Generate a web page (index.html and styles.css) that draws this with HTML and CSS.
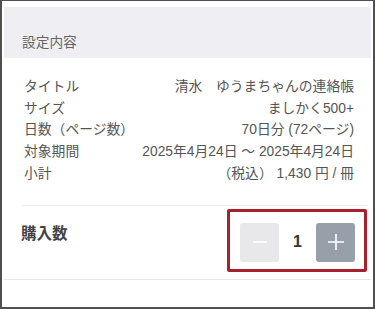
FILE: index.html
```html
<!DOCTYPE html>
<html lang="ja">
<head>
  <meta charset="UTF-8">
  <meta name="viewport" content="width=device-width, initial-scale=1.0">
  <title>設定内容</title>
  <link rel="stylesheet" href="styles.css">
</head>
<body>
  <div class="frame">
    <div class="section-head">設定内容</div>
    <dl class="spec">
      <div class="spec-row"><dt>タイトル</dt><dd>清水　ゆうまちゃんの連絡帳</dd></div>
      <div class="spec-row"><dt>サイズ</dt><dd>ましかく500+</dd></div>
      <div class="spec-row"><dt>日数（ページ数）</dt><dd>70日分 (72ページ)</dd></div>
      <div class="spec-row"><dt>対象期間</dt><dd>2025年4月24日 ～ 2025年4月24日</dd></div>
      <div class="spec-row"><dt>小計</dt><dd>（税込） 1,430 円 / 冊</dd></div>
    </dl>
    <div class="divider"></div>
    <div class="qty-row">
      <div class="qty-label">購入数</div>
      <div class="stepper">
        <button class="step-btn minus" disabled>
          <svg width="16" height="16" viewBox="0 0 16 16"><path d="M1 8h14" stroke="#fff" stroke-width="1.6"/></svg>
        </button>
        <span class="qty-value">1</span>
        <button class="step-btn plus">
          <svg width="18" height="18" viewBox="0 0 18 18"><path d="M1 9h16M9 1v16" stroke="#fff" stroke-width="1.6"/></svg>
        </button>
      </div>
    </div>
    <div class="divider full"></div>
  </div>
</body>
</html>
```

FILE: styles.css
```css
* {
  box-sizing: border-box;
}
body {
  margin: 0;
  background: #fff;
  font-family: "Liberation Sans", "Noto Sans CJK JP", sans-serif;
  color: #555;
}
.frame {
  width: 375px;
  height: 309px;
  border: 2px solid #505050;
  border-top-width: 1px;
  padding: 6px 2px 0 2px;
  overflow: hidden;
}
.section-head {
  background: #efeff3;
  height: 51px;
  padding: 27px 0 0 18px;
  font-size: 13.7px;
  line-height: 18px;
  color: #666;
}
.spec {
  margin: 0;
  padding: 18px 17px 0 20px;
}
.spec-row {
  display: flex;
  justify-content: space-between;
  font-size: 13.8px;
  line-height: 21.7px;
}
.spec-row dt,
.spec-row dd {
  margin: 0;
}
.divider {
  height: 1px;
  background: #ececec;
  margin: 20px 4px 0 18px;
}
.divider.full {
  margin: 7px 0 0 0;
  background: #e8e8e8;
}
.qty-row {
  display: flex;
  justify-content: space-between;
  align-items: flex-start;
  padding: 3px 4px 0 17px;
}
.qty-label {
  font-size: 15.5px;
  font-weight: bold;
  line-height: 20px;
  color: #444;
  margin-top: 15px;
}
.stepper {
  display: flex;
  align-items: center;
  border: 3px solid #a8202b;
  border-radius: 2px;
  width: 140px;
  height: 63px;
  padding: 4px 9px 0 10px;
}
.step-btn {
  width: 39px;
  height: 39px;
  border: none;
  border-radius: 3px;
  display: flex;
  align-items: center;
  justify-content: center;
  padding: 0;
}
.step-btn.minus {
  background: #e8e8ea;
}
.step-btn.plus {
  background: #97a0a9;
}
.qty-value {
  flex: 1;
  text-align: center;
  font-size: 16px;
  font-weight: bold;
  color: #333;
}
```
